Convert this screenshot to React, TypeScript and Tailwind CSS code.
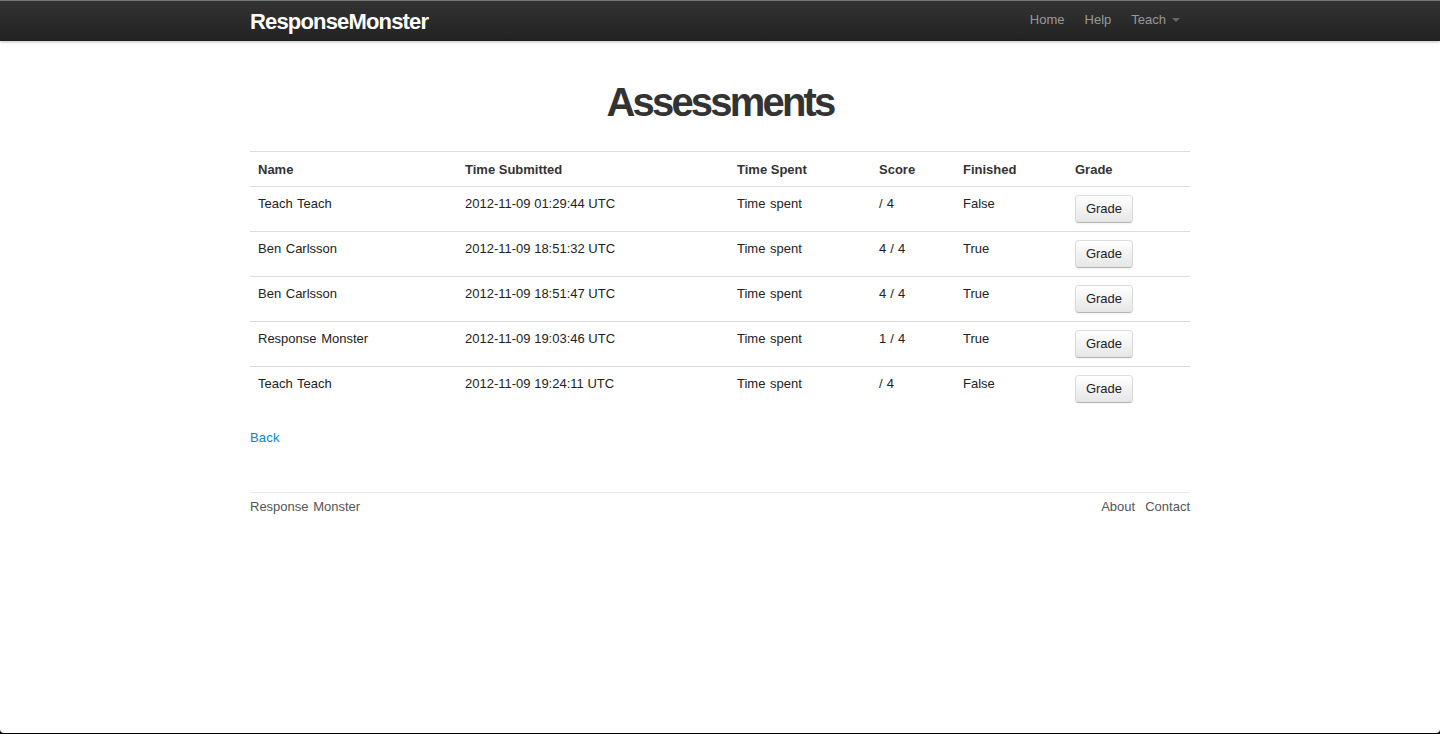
import React from "react";

interface Assessment {
  name: string;
  submitted: string;
  score: string;
  finished: string;
}

const assessments: Assessment[] = [
  { name: "Teach Teach", submitted: "2012-11-09 01:29:44 UTC", score: "/ 4", finished: "False" },
  { name: "Ben Carlsson", submitted: "2012-11-09 18:51:32 UTC", score: "4 / 4", finished: "True" },
  { name: "Ben Carlsson", submitted: "2012-11-09 18:51:47 UTC", score: "4 / 4", finished: "True" },
  { name: "Response Monster", submitted: "2012-11-09 19:03:46 UTC", score: "1 / 4", finished: "True" },
  { name: "Teach Teach", submitted: "2012-11-09 19:24:11 UTC", score: "/ 4", finished: "False" },
];

function Navbar() {
  return (
    <header className="h-[41px] border-t border-[#777] bg-gradient-to-b from-[#333] to-[#222] shadow-[0_1px_3px_rgba(0,0,0,0.25),inset_0_-1px_0_rgba(0,0,0,0.1)]">
      <div className="mx-auto flex h-10 w-[940px] items-center justify-between">
        <a href="#" className="pt-px text-[22px] leading-[39px] font-bold tracking-[-0.83px] text-white">
          ResponseMonster
        </a>
        <nav className="flex gap-5 pr-2.5 pb-0.5 leading-[18px] text-[#999]">
          <a href="#">Home</a>
          <a href="#">Help</a>
          <a href="#" className="flex items-center">
            Teach
            <span className="ml-1.5 size-0 border-x-4 border-t-4 border-x-transparent border-t-[#666]" />
          </a>
        </nav>
      </div>
    </header>
  );
}

function AssessmentTable() {
  return (
    <table className="w-[940px] table-fixed border-collapse text-left">
      <colgroup>
        <col className="w-[207px]" />
        <col className="w-[272px]" />
        <col className="w-[142px]" />
        <col className="w-[84px]" />
        <col className="w-[112px]" />
        <col className="w-[123px]" />
      </colgroup>
      <thead>
        <tr className="h-[35px] border-t border-[#ddd]">
          {["Name", "Time Submitted", "Time Spent", "Score", "Finished", "Grade"].map((title) => (
            <th key={title} className="px-2 pt-[9px] pb-[7px] align-top font-bold">
              {title}
            </th>
          ))}
        </tr>
      </thead>
      <tbody className="text-[#222]">
        {assessments.map((row) => (
          <tr key={row.submitted} className="h-[45px] border-t border-[#ddd]">
            <td className="px-2 pt-2 align-top [word-spacing:1px]">{row.name}</td>
            <td className="px-2 pt-2 align-top">{row.submitted}</td>
            <td className="px-2 pt-2 align-top [word-spacing:1px]">Time spent</td>
            <td className="px-2 pt-2 align-top [word-spacing:0.5px]">{row.score}</td>
            <td className="px-2 pt-2 align-top">{row.finished}</td>
            <td className="px-2 pt-2 align-top">
              <button className="block h-7 w-[58px] rounded border border-[#ccc] border-x-[#d9d9d9] border-t-[#ddd] border-b-[#b3b3b3] bg-gradient-to-b from-white to-[#e6e6e6] leading-[18px] shadow-[inset_0_1px_0_rgba(255,255,255,0.2),0_1px_2px_rgba(0,0,0,0.05)]">
                Grade
              </button>
            </td>
          </tr>
        ))}
      </tbody>
    </table>
  );
}

export default function App() {
  return (
    <div className="h-[734px] overflow-hidden bg-black">
      <div className="h-[733px] overflow-hidden rounded-b-[4px] bg-white font-['Liberation_Sans',Arial,sans-serif] text-[13px] leading-[18px] text-[#333]">
        <Navbar />
        <main className="mx-auto w-[940px]">
          <h1 className="pt-[41px] pb-[29px] text-center text-[40px] leading-10 font-bold tracking-[-2.8px]">
            Assessments
          </h1>
          <AssessmentTable />
          <a href="#" className="mt-[17px] block w-fit tracking-[0.2px] text-[#08c]">
            Back
          </a>
          <footer className="mt-[45px] flex justify-between border-t border-[#eaeaea] pt-[5px] text-[#555]">
            <span className="[word-spacing:1px]">Response Monster</span>
            <div className="flex gap-2.5">
              <a href="#">About</a>
              <a href="#">Contact</a>
            </div>
          </footer>
        </main>
      </div>
    </div>
  );
}
